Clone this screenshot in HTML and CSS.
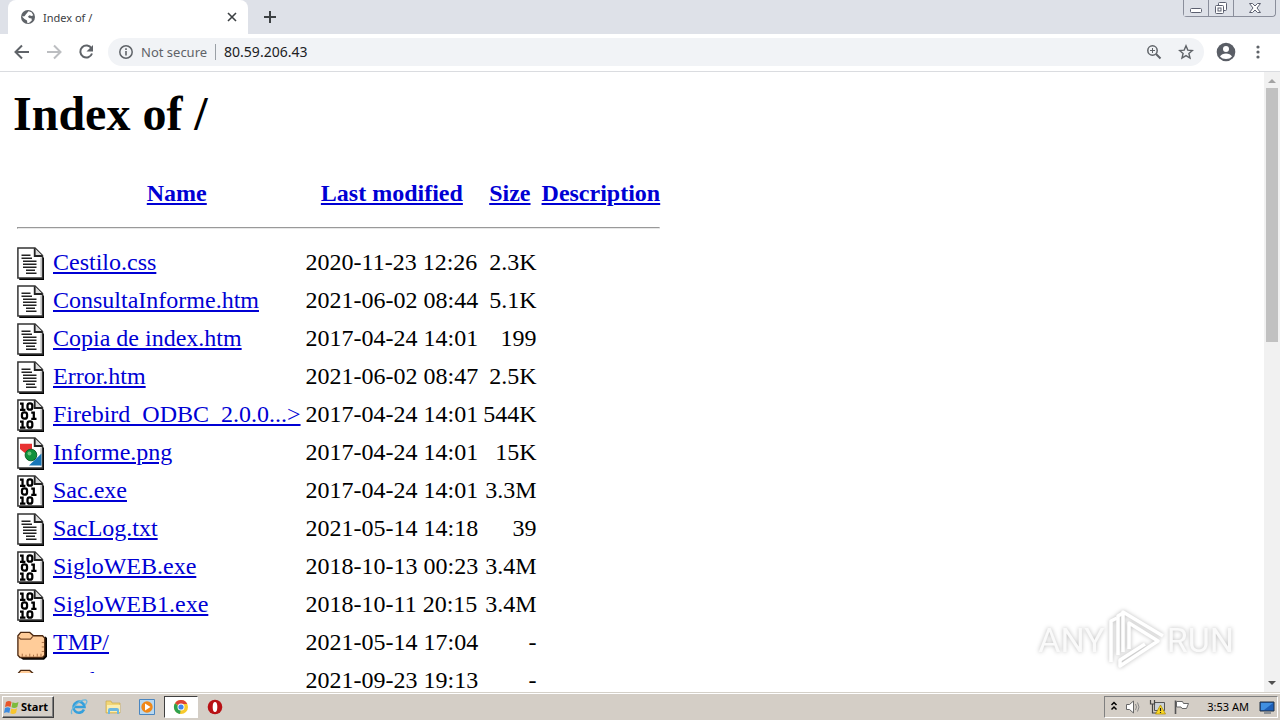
FILE: index.html
```
<!DOCTYPE html>
<html lang="en">
<head>
    <meta charset="UTF-8">
    <meta name="viewport" content="width=device-width, initial-scale=1.0">
    <title>Index of /</title>
    <link rel="stylesheet" href="styles.css">
</head>
<body>
    <!-- shared icons -->
    <svg class="defs" aria-hidden="true">
        <symbol id="page" viewBox="0 0 20 22">
            <path d="M1.500 21.300h15.800V7" fill="none" stroke="#000" stroke-width="1.400"/>
            <path d="M.6.7h11.400l5 5v14.900H.6z" fill="#fff" stroke="#333"/>
            <path d="M11.800.8v5.200h5.200" fill="#ddd" stroke="#222" stroke-width="1.200"/>
            <path d="M16 7v12.500" stroke="#bbb" stroke-width=".8"/>
        </symbol>
        <symbol id="text" viewBox="0 0 20 22">
            <use href="#page"/>
            <path d="M3 5.500h6M3 7.500h7M4 9.500h9M4 11.500h9M4 13.500h9M6 15.500h6M6 17.500h7" stroke="#222" stroke-width="1.100"/>
        </symbol>
        <symbol id="binary" viewBox="0 0 20 22">
            <use href="#page"/>
            <g fill="none" stroke="#000" stroke-width="1.500">
                <path d="M2 3h1.700v4M2 7.200h3.600M9.500 9h1.700v4M9.500 13.200h3.500M2 15h1.700v4M2 19h3.600"/>
                <rect x="7" y="2.900" width="3.200" height="4.200" rx="1.500"/>
                <rect x="3.300" y="8.900" width="3.400" height="4.200" rx="1.500"/>
                <rect x="7" y="14.900" width="3.200" height="4.200" rx="1.500"/>
            </g>
        </symbol>
        <symbol id="image" viewBox="0 0 20 22">
            <use href="#page"/>
            <path d="M2 4.500h8v6H5l-3-2.500z" fill="#e83232"/>
            <path d="M16.300 11v8H8z" fill="#1676b8"/>
            <circle cx="9.300" cy="12" r="3.900" fill="#12913d" stroke="#0a5a24" stroke-width=".6"/>
            <circle cx="8.300" cy="11" r="1.300" fill="#6cc57c"/>
        </symbol>
        <symbol id="folder" viewBox="0 0 20 22">
            <g transform="translate(0 1.300)">
                <path d="M2 19l2 1.500h14l2-2V6l-1-1z" fill="#000"/>
                <path d="M.6 4.500L2.500 2.300h6L11 4.500h6L18.500 6v11.500L17 19H2L.6 17.500z" fill="#fc9" stroke="#4d2a12" stroke-width=".9"/>
                <path d="M1 5.500l1.500 1.300H9L10.500 5" fill="none" stroke="#7a4a28" stroke-width=".8"/>
                <path d="M3.500 18.500v-2M6 18.500v-1.300M8.500 18.500v-2M11 18.500v-1.300M13.500 18.500v-2M16 18.500v-2M18 15h-1.500M18 12h-1.500M18 9h-1.500" stroke="#a46a40" stroke-width=".6"/>
            </g>
        </symbol>
    </svg>

    <header class="tabs">
        <div class="tab">
            <svg class="favicon" viewBox="0 0 16 16"><circle cx="8" cy="8" r="7" fill="#5f6368"/><path d="M8.500 2.200l3 1 1.800 3-1.600.8-2.200-.8-1.500 1.200 1 1.600 2.600.4.200 2-2.600 2.400-1.800.5-.4-2.800L4.500 10 2 7.500l2.500-.3 1.500-2z" fill="#fff"/></svg>
            <span class="tab-title">Index of /</span>
            <button class="plain" aria-label="Close tab"><svg width="10" height="10" viewBox="0 0 10 10"><path d="M1 1l8 8M9 1L1 9" stroke="#3c4043" stroke-width="1.600"/></svg></button>
        </div>
        <button class="plain new-tab" aria-label="New tab"><svg width="12" height="12" viewBox="0 0 12 12"><path d="M6 0v12M0 6h12" stroke="#3c4043" stroke-width="2"/></svg></button>
        <div class="window-buttons">
            <button aria-label="Minimize"><svg width="14" height="14" viewBox="0 0 14 14"><rect x="1.500" y="7.500" width="11" height="4" rx="1" fill="#fff" stroke="#5c6070"/></svg></button>
            <button aria-label="Restore"><svg width="14" height="14" viewBox="0 0 14 14"><g fill="#fff" stroke="#5c6070"><rect x="4.500" y="1.500" width="8" height="8" rx="1"/><rect x="1.500" y="4.500" width="8" height="8" rx="1"/><rect x="4" y="7" width="3" height="3"/></g></svg></button>
            <button class="close" aria-label="Close"><svg width="14" height="14" viewBox="0 0 14 14"><path d="M1.500 2.500h3L7 5l2.500-2.500h3L9 7l3.500 4.500h-3L7 9l-2.500 2.500h-3L5 7z" fill="#fff" stroke="#5c6070"/></svg></button>
        </div>
    </header>

    <nav class="toolbar">
        <button class="plain" aria-label="Back"><svg width="16" height="16" viewBox="0 0 16 16"><path d="M15 8H2M8 1.500L1.500 8 8 14.500" fill="none" stroke="#5f6368" stroke-width="2"/></svg></button>
        <button class="plain" aria-label="Forward" disabled><svg width="16" height="16" viewBox="0 0 16 16"><path d="M1 8h13M8 1.500L14.500 8 8 14.500" fill="none" stroke="#bcbec1" stroke-width="2"/></svg></button>
        <button class="plain" aria-label="Reload"><svg width="16" height="16" viewBox="0 0 16 16"><path d="M13.500 4.500A6 6 0 1 0 14 9.500" fill="none" stroke="#5f6368" stroke-width="2"/><path d="M15 1v6.500H8.500z" fill="#5f6368"/></svg></button>
        <div class="address">
            <svg width="16" height="16" viewBox="0 0 16 16"><circle cx="8" cy="8" r="6.200" fill="none" stroke="#5f6368" stroke-width="1.500"/><path d="M8 7v4.500M8 4.300v1.600" stroke="#5f6368" stroke-width="1.600"/></svg>
            <label class="secure" for="url">Not secure</label>
            <input id="url" class="url" type="text" value="80.59.206.43">
            <button class="plain" aria-label="Zoom"><svg width="16" height="16" viewBox="0 0 16 16"><circle cx="6.500" cy="6.500" r="4.700" fill="none" stroke="#5f6368" stroke-width="1.500"/><path d="M10 10l4.500 4.500" stroke="#5f6368" stroke-width="2"/><path d="M6.500 4v5M4 6.500h5" stroke="#5f6368"/></svg></button>
            <button class="plain" aria-label="Bookmark"><svg width="16" height="16" viewBox="0 0 16 16"><path d="M8 1.800l1.800 4.300 4.600.4-3.500 3 1.100 4.600-4-2.500-4 2.500 1.100-4.600-3.500-3 4.600-.4z" fill="none" stroke="#5f6368" stroke-width="1.400"/></svg></button>
        </div>
        <button class="plain" aria-label="Profile"><svg width="20" height="20" viewBox="0 0 20 20"><circle cx="10" cy="10" r="9.300" fill="#5a5e66"/><circle cx="10" cy="7" r="3" fill="#fff"/><path d="M4 14.500c1-2 3.500-3 6-3s5 1 6 3c-1.500 1.700-3.500 2.500-6 2.500s-4.500-.8-6-2.500z" fill="#fff"/></svg></button>
        <button class="plain menu" aria-label="Menu"><svg width="4" height="16" viewBox="0 0 4 16"><g fill="#5f6368"><circle cx="2" cy="3" r="1.600"/><circle cx="2" cy="8" r="1.600"/><circle cx="2" cy="13" r="1.600"/></g></svg></button>
    </nav>

    <div class="viewport">
        <main class="page">
            <h1>Index of /</h1>
            <table>
                <tr class="head">
                    <th></th>
                    <th><a href="#">Name</a></th>
                    <th><a href="#">Last modified</a></th>
                    <th><a href="#">Size</a></th>
                    <th><a href="#">Description</a></th>
                </tr>
                <tr><th colspan="5"><hr></th></tr>
                <tr><td><svg class="icon"><use href="#text"/></svg></td><td><a href="#">Cestilo.css</a></td><td>2020-11-23 12:26</td><td class="size">2.3K</td><td></td></tr>
                <tr><td><svg class="icon"><use href="#text"/></svg></td><td><a href="#">ConsultaInforme.htm</a></td><td>2021-06-02 08:44</td><td class="size">5.1K</td><td></td></tr>
                <tr><td><svg class="icon"><use href="#text"/></svg></td><td><a href="#">Copia de index.htm</a></td><td>2017-04-24 14:01</td><td class="size">199</td><td></td></tr>
                <tr><td><svg class="icon"><use href="#text"/></svg></td><td><a href="#">Error.htm</a></td><td>2021-06-02 08:47</td><td class="size">2.5K</td><td></td></tr>
                <tr><td><svg class="icon"><use href="#binary"/></svg></td><td><a href="#">Firebird_ODBC_2.0.0...&gt;</a></td><td>2017-04-24 14:01</td><td class="size">544K</td><td></td></tr>
                <tr><td><svg class="icon"><use href="#image"/></svg></td><td><a href="#">Informe.png</a></td><td>2017-04-24 14:01</td><td class="size">15K</td><td></td></tr>
                <tr><td><svg class="icon"><use href="#binary"/></svg></td><td><a href="#">Sac.exe</a></td><td>2017-04-24 14:01</td><td class="size">3.3M</td><td></td></tr>
                <tr><td><svg class="icon"><use href="#text"/></svg></td><td><a href="#">SacLog.txt</a></td><td>2021-05-14 14:18</td><td class="size">39</td><td></td></tr>
                <tr><td><svg class="icon"><use href="#binary"/></svg></td><td><a href="#">SigloWEB.exe</a></td><td>2018-10-13 00:23</td><td class="size">3.4M</td><td></td></tr>
                <tr><td><svg class="icon"><use href="#binary"/></svg></td><td><a href="#">SigloWEB1.exe</a></td><td>2018-10-11 20:15</td><td class="size">3.4M</td><td></td></tr>
                <tr><td><svg class="icon"><use href="#folder"/></svg></td><td><a href="#">TMP/</a></td><td>2021-05-14 17:04</td><td class="size">-</td><td></td></tr>
                <tr><td><svg class="icon"><use href="#folder"/></svg></td><td><a href="#">cgi-bin/</a></td><td>2021-09-23 19:13</td><td class="size">-</td><td></td></tr>
            </table>
        </main>
        <div class="scrollbar">
            <svg width="16" height="16" viewBox="0 0 16 16"><path d="M4 11l4-4 4 4z" fill="#a3a3a3"/></svg>
            <div class="thumb"></div>
            <svg width="16" height="16" viewBox="0 0 16 16"><path d="M4 5l4 4 4-4z" fill="#505050"/></svg>
        </div>
        <div class="status-bubble"></div>
        <div class="watermark">
            <span>ANY</span>
            <svg width="58" height="64" viewBox="0 0 58 64"><g fill="none" stroke="#fff" stroke-width="3.500" stroke-linejoin="round"><path d="M4 54V13l6-3"/><path d="M11 47V8l5-3"/><path d="M16 44V4l40 24"/><path d="M22 41V15l29 18-38 25v-6l25-16"/></g></svg>
            <span>RUN</span>
        </div>
    </div>

    <footer class="taskbar">
        <button class="start"><svg width="16" height="16" viewBox="0 0 16 16"><path d="M2 3q3-2 5.500 0L6.500 8Q4 6.500 1 8z" fill="#e8562a"/><path d="M8.500 3.300q3 1.700 6-.3l-1.200 5q-3 1.700-5.800.2z" fill="#7dbb3c"/><path d="M1 9q3-1.500 5.300.2l-1 4.800q-2.500-1.500-5.300 0z" fill="#3c8be0"/><path d="M7.300 9.500q3 1.500 5.800-.2L12 14q-3 1.700-5.700.2z" fill="#f8c52c"/></svg>Start</button>
        <button class="task" aria-label="Internet Explorer"><svg width="18" height="18" viewBox="0 0 18 18"><path d="M14 11.500A5.500 5.500 0 1 1 14.500 9H5" fill="none" stroke="#35a0dc" stroke-width="2.600"/><path d="M2 16C-1 12 10 1 16 2c2 1 0 4-1 5" fill="none" stroke="#6cb8dc" stroke-width="1.300"/></svg></button>
        <button class="task" aria-label="Explorer"><svg width="18" height="18" viewBox="0 0 18 18"><path d="M2 3h5l1 2h8v10H2z" fill="#f2d677" stroke="#c8a94b" stroke-width=".7"/><path d="M3 7h13v7H3z" fill="#fbeeb0"/><path d="M4 16v-4q0-2 2-2h7q2 0 2 2v4h-2v-3H6v3z" fill="#6db8e0"/></svg></button>
        <button class="task" aria-label="Media Player"><svg width="18" height="18" viewBox="0 0 18 18"><path d="M1.500 1.500h15v15h-15z" fill="#b8d8f0" stroke="#4a86c0"/><circle cx="9" cy="9" r="5.700" fill="#f08818"/><path d="M7 5.500v7L12.500 9z" fill="#fff"/></svg></button>
        <button class="task active" aria-label="Chrome"><svg width="16" height="16" viewBox="0 0 16 16"><circle cx="8" cy="8" r="7" fill="#f8ca2c"/><path d="M8 8L2 4.300A7 7 0 0 1 14.200 5H8z" fill="#dd4336"/><path d="M2 4.300L8 9l-1 6A7 7 0 0 1 2 4.300z" fill="#2fa14e"/><circle cx="8" cy="8" r="3.500" fill="#fff"/><circle cx="8" cy="8" r="2.600" fill="#4086ee"/></svg></button>
        <button class="task" aria-label="Opera"><svg width="16" height="16" viewBox="0 0 16 16"><circle cx="8" cy="8" r="7.300" fill="#b81014"/><ellipse cx="8" cy="8" rx="2.300" ry="5" fill="#fff"/></svg></button>
        <div class="tray">
            <svg width="10" height="16" viewBox="0 0 10 16"><path d="M2.500 6L5 3.500 7.500 6M2.500 10.500L5 8 7.500 10.500" fill="none" stroke="#000" stroke-width="1.500"/></svg>
            <svg width="18" height="16" viewBox="0 0 18 16"><path d="M1.500 5.500h3L8.500 2v12l-4-3.500h-3z" fill="#fff" stroke="#666"/><path d="M10.500 5q2 3 0 6M12.500 3.500q3 4.500 0 9" fill="none" stroke="#888"/></svg>
            <svg width="18" height="16" viewBox="0 0 18 16"><path d="M5.500 3.500h10v8h-10z" fill="#ccd2d6" stroke="#555"/><path d="M1.500 1v4h4V1M3.500 5v9H8" fill="none" stroke="#444" stroke-width="1.200"/><path d="M11.500 6l5 9h-10z" fill="#fbd823" stroke="#a98600" stroke-width=".7"/><path d="M11.500 9v3M11.500 13v1" stroke="#222" stroke-width="1.200"/></svg>
            <svg width="18" height="16" viewBox="0 0 18 16"><path d="M2.500 15V1.500" stroke="#555" stroke-width="1.600"/><path d="M3.500 2.500h6l1 2h5l-2 5H9l-1-1.500H3.500z" fill="#fff" stroke="#666"/></svg>
            <time>3:53 AM</time>
            <svg width="16" height="16" viewBox="0 0 16 16"><path d="M1 3h14v9H1z" fill="#1d5fb8" stroke="#234"/><path d="M2 4h12L5 11H2z" fill="#408fe0"/><path d="M5 14h7" stroke="#456"/></svg>
        </div>
    </footer>
</body>
</html>
```
FILE: styles.css
```
* {
    box-sizing: border-box;
}

body {
    margin: 0;
    height: 100vh;
    display: flex;
    flex-direction: column;
    overflow: hidden;
    background: #fff;
    font-family: "Noto Sans", sans-serif;
}

.defs {
    display: none;
}

svg {
    display: block;
    flex: none;
}

button {
    font-family: inherit;
    padding: 0;
}

.plain {
    border: none;
    background: none;
}

/* tab strip */
.tabs {
    display: flex;
    align-items: center;
    height: 34px;
    flex: none;
    padding-left: 8px;
    background: #dee1e8;
}

.tab {
    display: flex;
    align-items: center;
    gap: 7px;
    width: 240px;
    height: 34px;
    padding: 0 11px 0 12px;
    background: #fff;
    border-radius: 8px 8px 0 0;
}

.favicon {
    width: 16px;
    height: 16px;
}

.tab-title {
    flex: 1;
    font-size: 11px;
    color: #3c4043;
}

.new-tab {
    margin-left: 16px;
}

.window-buttons {
    display: flex;
    align-self: flex-start;
    height: 17px;
    margin-left: auto;
    margin-right: 4px;
    border: 1px solid #8a8e9b;
    border-top: none;
    border-radius: 0 0 4px 4px;
}

.window-buttons button {
    display: flex;
    justify-content: center;
    align-items: center;
    width: 25px;
    border: none;
    border-right: 1px solid #8a8e9b;
    background: #dee1e8;
}

.window-buttons .close {
    width: 41px;
    border-right: none;
    border-radius: 0 0 4px 0;
}

/* toolbar */
.toolbar {
    display: flex;
    align-items: center;
    gap: 16px;
    height: 38px;
    flex: none;
    padding: 0 20px 2px 14px;
    border-bottom: 1px solid #dadce0;
}

.address {
    display: flex;
    align-items: center;
    flex: 1;
    gap: 16px;
    height: 28px;
    margin-left: -2px;
    margin-right: -4px;
    padding: 0 10px;
    border-radius: 14px;
    background: #f1f3f6;
    font-size: 14px;
}

.secure {
    margin-left: -9px;
    padding-right: 8px;
    border-right: 1px solid #9aa0a6;
    line-height: 16px;
    font-size: 13px;
    color: #5f6368;
}

.url {
    flex: 1;
    margin-left: -8px;
    padding: 0;
    border: none;
    background: none;
    font-family: inherit;
    font-size: 14px;
    color: #202124;
}

.menu {
    margin-left: 4px;
}

/* page */
.viewport {
    position: relative;
    display: flex;
    flex: 1;
    min-height: 0;
    overflow: hidden;
}

.page {
    flex: 1;
    padding: 0 13px;
    font-family: "Liberation Serif", serif;
    font-size: 24px;
    line-height: 27px;
    color: #000;
}

h1 {
    margin: 14px 0 32px;
    font-size: 48px;
    line-height: 55px;
}

table {
    border-spacing: 3px;
}

th, td {
    padding: 1px;
    white-space: nowrap;
}

td {
    padding-bottom: 4px;
}

td:first-child {
    padding: 1px 2px 1px 1px;
}

.head th {
    height: 35px;
}

.size {
    text-align: right;
}

a {
    color: #0000d4;
}

hr {
    margin: 12px 0 13px;
    border: 1px solid;
    border-color: #999 #e8e8e8 #e8e8e8 #999;
}

.icon {
    width: 30px;
    height: 33px;
}

.scrollbar {
    display: flex;
    flex-direction: column;
    width: 16px;
    background: #f1f1f1;
}

.thumb {
    width: 12px;
    height: 41%;
    margin: 0 auto auto;
    background: #c1c1c1;
}

.status-bubble {
    position: absolute;
    left: 0;
    bottom: 0;
    width: 300px;
    height: 19px;
    background: #fff;
}

.watermark {
    position: absolute;
    right: 46px;
    bottom: 20px;
    display: flex;
    align-items: center;
    gap: 2px;
    font-family: Roboto, sans-serif;
    font-size: 34px;
    line-height: 64px;
    color: #fafafa;
    filter: drop-shadow(0 0 2px #bbb);
}

/* taskbar */
.taskbar {
    display: flex;
    align-items: center;
    height: 28px;
    flex: none;
    padding: 0 2px;
    border-top: 1px solid #d4d0c8;
    box-shadow: inset 0 1px #fff;
    background: #d4cec6;
}

.start {
    display: flex;
    align-items: center;
    gap: 1px;
    width: 52px;
    height: 22px;
    margin-right: 8px;
    padding: 0 1px;
    border: 1px solid;
    border-color: #fff #404040 #404040 #fff;
    background: #d4cec6;
    box-shadow: inset -1px -1px #808080;
    font-size: 11px;
    font-weight: bold;
}

.task {
    display: flex;
    justify-content: center;
    align-items: center;
    width: 34px;
    height: 22px;
    border: none;
    background: none;
}

.active {
    border: 1px solid;
    border-color: #404040 #fff #fff #404040;
    background: #fff;
}

.tray {
    display: flex;
    align-items: center;
    gap: 6px;
    height: 22px;
    margin-left: auto;
    padding: 0 2px 0 4px;
    border: 1px solid;
    border-color: #808080 #fff #fff #808080;
}

time {
    margin: 0 4px 0 10px;
    font-size: 11px;
    color: #000;
}
```
